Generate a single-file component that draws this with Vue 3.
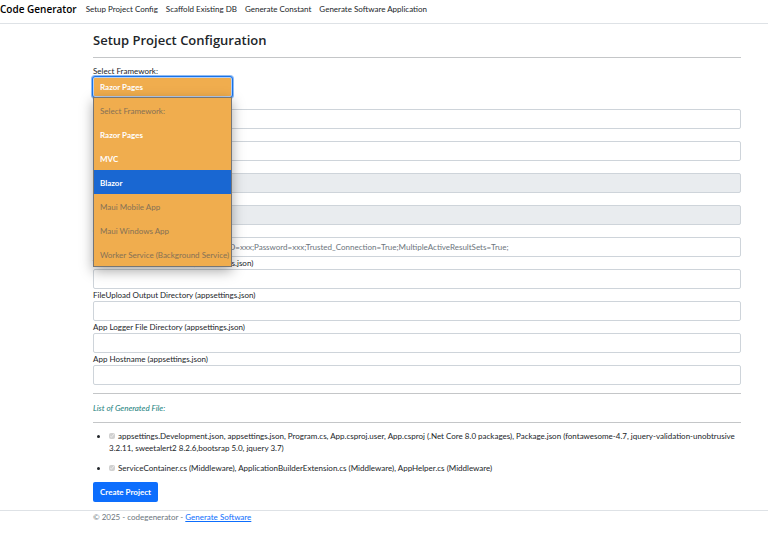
<script setup>
import { ref } from 'vue'

const navLinks = ['Setup Project Config', 'Scaffold Existing DB', 'Generate Constant', 'Generate Software Application']

const options = [
  { label: 'Select Framework:', disabled: true },
  { label: 'Razor Pages' },
  { label: 'MVC' },
  { label: 'Blazor' },
  { label: 'Maui Mobile App', disabled: true },
  { label: 'Maui Windows App', disabled: true },
  { label: 'Worker Service (Background Service)', disabled: true },
]
const framework = ref('Razor Pages')
const highlighted = ref('Blazor')
const open = ref(true)

function choose(option) {
  if (option.disabled) return
  framework.value = option.label
  open.value = false
}

const fields = ref([
  { id: 'project', label: 'Project Name', value: '' },
  { id: 'directory', label: 'Project Directory', value: '' },
  { id: 'namespace', label: 'Namespace', value: '', disabled: true },
  { id: 'context', label: 'DB Context', value: '', disabled: true },
  {
    id: 'connection',
    label: 'Connection String',
    value: '',
    placeholder: 'Server=xxxx;Database=xxxxxx;User ID=xxx;Password=xxx;Trusted_Connection=True;MultipleActiveResultSets=True;',
  },
  { id: 'template', label: 'Templates Output Directory (appsettings.json)', value: '' },
  { id: 'upload', label: 'FileUpload Output Directory (appsettings.json)', value: '' },
  { id: 'logger', label: 'App Logger File Directory (appsettings.json)', value: '' },
  { id: 'hostname', label: 'App Hostname (appsettings.json)', value: '' },
])

const files = [
  'appsettings.Development.json, appsettings.json, Program.cs, App.csproj.user, App.csproj (.Net Core 8.0 packages), Package.json (fontawesome-4.7, jquery-validation-unobtrusive 3.2.11, sweetalert2 8.2.6,bootsrap 5.0, jquery 3.7)',
  'ServiceContainer.cs (Middleware), ApplicationBuilderExtension.cs (Middleware), AppHelper.cs (Middleware)',
]
</script>

<template>
  <div class="page">
    <header class="navbar">
      <a class="brand" href="#">Code Generator</a>
      <nav class="nav">
        <a v-for="link in navLinks" :key="link" href="#">{{ link }}</a>
      </nav>
    </header>

    <main class="container">
      <h1>Setup Project Configuration</h1>
      <hr />
      <form @submit.prevent>
        <div class="field">
          <label for="framework">Select Framework:</label>
          <div class="dropdown">
            <select id="framework" v-model="framework" @mousedown.prevent="open = !open">
              <option v-for="o in options" :key="o.label" :disabled="o.disabled">{{ o.label }}</option>
            </select>
            <ul v-if="open" class="menu" role="listbox" aria-label="Framework">
              <li
                v-for="o in options"
                :key="o.label"
                role="option"
                :aria-selected="o.label === framework"
                :class="{ disabled: o.disabled, active: o.label === highlighted }"
                @mouseenter="!o.disabled && (highlighted = o.label)"
                @click="choose(o)"
              >{{ o.label }}</li>
            </ul>
          </div>
        </div>
        <div v-for="f in fields" :key="f.id" class="field">
          <label :for="f.id">{{ f.label }}</label>
          <input :id="f.id" v-model="f.value" type="text" :placeholder="f.placeholder" :disabled="f.disabled" />
        </div>
        <hr />
        <p class="list-title">List of Generated File:</p>
        <hr />
        <ul class="files">
          <li v-for="(file, i) in files" :key="i">
            <label><input type="checkbox" checked disabled /> {{ file }}</label>
          </li>
        </ul>
        <button type="submit">Create Project</button>
      </form>
    </main>

    <footer class="footer">© 2025 - codegenerator - <a href="#">Generate Software</a></footer>
  </div>
</template>

<style>
body {
  margin: 0;
  background: #fff;
}
</style>

<style scoped>
.page {
  font-family: Lato, "Open Sans", sans-serif;
  font-size: 8px;
  line-height: 12px;
  color: #212529;
}
.page * {
  box-sizing: border-box;
}
.navbar {
  display: flex;
  align-items: center;
  gap: 9px;
  height: 24px;
  padding-bottom: 5px;
  border-bottom: 1px solid #dee2e6;
}
.brand {
  font-family: "Open Sans", sans-serif;
  font-size: 10px;
  font-weight: 600;
  color: #000;
  text-decoration: none;
}
.nav {
  display: flex;
  gap: 8px;
}
.nav a {
  color: #212529;
  text-decoration: none;
}
.container,
.footer {
  padding: 0 27px 0 93px;
}
h1 {
  margin: 8px 0;
  font-family: "Open Sans", sans-serif;
  font-size: 13px;
  line-height: 17px;
  font-weight: 600;
}
hr {
  margin: 8px 0 7px;
  border: 0;
  border-top: 1px solid #c4c6c8;
}
.field label {
  display: block;
  white-space: nowrap;
}
.field input {
  display: block;
  width: 100%;
  height: 20px;
  padding: 0 6px;
  font: inherit;
  color: inherit;
  background: #fff;
  border: 1px solid #ced4da;
  border-radius: 2px;
}
.field input::placeholder {
  color: #6c757d;
  opacity: 1;
}
.field input:disabled {
  background: #e9ecef;
}
.dropdown {
  position: relative;
  width: 139px;
}
select {
  display: block;
  width: 100%;
  height: 20px;
  padding: 0 6px;
  appearance: none;
  font: inherit;
  font-weight: 700;
  color: #fff;
  background: #f0ad4e;
  border: 1px solid #b5d0f5;
  border-radius: 2px;
  outline: 1px solid #1a73e8;
  box-shadow: 0 0 0 2px #8fbcf5;
}
.menu {
  position: absolute;
  z-index: 1;
  top: 100%;
  left: 0;
  width: 100%;
  margin: 0;
  padding: 0;
  list-style: none;
  background: #f0ad4e;
  border: 1px solid #767676;
  box-shadow: 0 4px 12px rgba(0, 0, 0, 0.35);
}
.menu li {
  padding: 2px 6px 0;
  line-height: 22px;
  font-weight: 700;
  color: #fff;
  white-space: nowrap;
}
.menu .disabled {
  font-weight: 400;
  color: #857156;
}
.menu .active {
  background: #1967d2;
}
.list-title {
  margin: 8px 0;
  font-style: italic;
  color: #20807c;
}
.files {
  margin: 7px 0 8px;
  padding-left: 16px;
}
.files li + li {
  margin-top: 8px;
}
.files input {
  width: 6px;
  height: 6px;
  margin: 0 1px 0 0;
}
button {
  display: block;
  height: 20px;
  padding: 0 7px;
  font: inherit;
  font-weight: 700;
  color: #fff;
  background: #0d6efd;
  border: 0;
  border-radius: 2px;
}
.footer {
  margin-top: 8px;
  border-top: 1px solid #dee2e6;
  color: #6c757d;
}
.footer a {
  color: #0d6efd;
}
</style>
